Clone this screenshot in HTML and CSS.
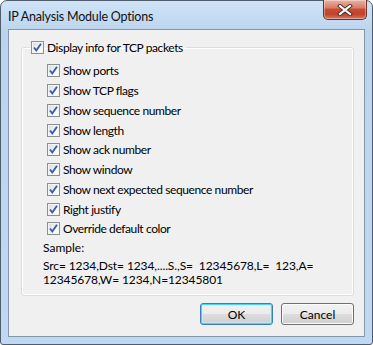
FILE: index.html
```html
<!DOCTYPE html>
<html lang="en">
<head>
  <meta charset="UTF-8">
  <title>IP Analysis Module Options</title>
  <link rel="stylesheet" href="styles.css">
</head>
<body>
  <div class="window">
    <div class="titlebar">
      <span class="title">IP Analysis Module Options</span>
      <button class="close" aria-label="Close">
        <svg width="16" height="12" viewBox="0 0 16 12">
          <path d="M3 2 L13 10 M13 2 L3 10" stroke="#4a2a24" stroke-width="4" stroke-linecap="square"/>
          <path d="M3 2 L13 10 M13 2 L3 10" stroke="#fff" stroke-width="2.2" stroke-linecap="square"/>
        </svg>
      </button>
    </div>

    <div class="client">
      <fieldset class="group">
        <legend>
          <label class="check"><span class="box"></span>Display info for TCP packets</label>
        </legend>

        <ul class="options">
          <li><label class="check"><span class="box"></span>Show ports</label></li>
          <li><label class="check"><span class="box"></span>Show TCP flags</label></li>
          <li><label class="check"><span class="box"></span>Show sequence number</label></li>
          <li><label class="check"><span class="box"></span>Show length</label></li>
          <li><label class="check"><span class="box"></span>Show ack number</label></li>
          <li><label class="check"><span class="box"></span>Show window</label></li>
          <li><label class="check"><span class="box"></span>Show next expected sequence number</label></li>
          <li><label class="check"><span class="box"></span>Right justify</label></li>
          <li><label class="check"><span class="box"></span>Override default color</label></li>
        </ul>

        <div class="sample">
          <div class="sample-label">Sample:</div>
          <div class="sample-line">Src= 1234,Dst= 1234,....S.,S=&nbsp; 12345678,L=&nbsp; 123,A=</div>
          <div class="sample-line">12345678,W= 1234,N=12345801</div>
        </div>
      </fieldset>

      <div class="buttons">
        <button class="btn default">OK</button>
        <button class="btn">Cancel</button>
      </div>
    </div>
  </div>
</body>
</html>
```

FILE: styles.css
```css
* {
  box-sizing: border-box;
  margin: 0;
  padding: 0;
}

body {
  font-family: Lato, 'Open Sans', sans-serif;
  font-size: 12px;
  color: #000;
  background: #fff;
}

.window {
  width: 373px;
  height: 345px;
  border: 1px solid #4f5d6c;
  border-radius: 7px 7px 3px 3px;
  background: linear-gradient(180deg, #cfe3f7 0, #bcd5ee 30px, #c0d8f1 100%);
  padding: 0 7px 7px;
  display: flex;
  flex-direction: column;
}

.titlebar {
  height: 28px;
  display: flex;
  justify-content: space-between;
  align-items: flex-start;
}

.title {
  padding-top: 8px;
  font-size: 12.5px;
  letter-spacing: -0.2px;
  color: #111;
}

.close {
  width: 44px;
  height: 20px;
  margin: -1px -2px 0 0;
  border: 1px solid #6b3328;
  border-top: none;
  border-radius: 0 0 5px 5px;
  background: linear-gradient(180deg, #eab3a6 0, #db7d69 40%, #c74a33 50%, #c0432c 75%, #d77a62 100%);
  box-shadow: inset 0 0 0 1px rgba(255, 255, 255, 0.35);
  display: flex;
  align-items: center;
  justify-content: center;
}

.client {
  flex: 1;
  background: #f0f0f0;
  border: 1px solid #8396aa;
  padding: 10px 10px 0 12px;
}

.group {
  border: 1px solid #d5dfe5;
  border-radius: 3px;
  box-shadow: inset 0 0 0 1px #fff;
  height: 256px;
  padding: 0 0 0 8px;
}

.group legend {
  padding: 0 3px 0 1px;
  line-height: 15px;
}

.check {
  display: flex;
  align-items: center;
  height: 15px;
  white-space: nowrap;
  letter-spacing: -0.4px;
}

.box {
  width: 13px;
  height: 13px;
  margin-right: 3px;
  border: 1px solid #8e8f8f;
  background:
    url("data:image/svg+xml;utf8,<svg xmlns='http://www.w3.org/2000/svg' width='11' height='11' viewBox='0 0 11 11'><path d='M2 5.5 L4.3 8.5 L9 1.8' fill='none' stroke='%23355cb0' stroke-width='1.9'/></svg>") center / 11px 11px no-repeat,
    linear-gradient(135deg, #d8dadb 0, #f6f6f6 60%, #ffffff 100%);
  box-shadow: inset 0 0 0 1px #f4f4f4;
  flex-shrink: 0;
}

.options {
  list-style: none;
  margin: 6px 0 0 17px;
}

.options li {
  height: 19.75px;
  display: flex;
  align-items: center;
}

.sample {
  margin: 1px 0 0 13px;
}

.sample-label {
  line-height: 16px;
}

.sample-label + .sample-line {
  margin-top: 3px;
}

.sample-line {
  line-height: 14px;
  height: 14px;
  white-space: nowrap;
  letter-spacing: -0.1px;
}

.buttons {
  display: flex;
  justify-content: flex-end;
  gap: 8px;
  margin-top: 7px;
}

.btn {
  width: 73px;
  height: 22px;
  font-family: inherit;
  font-size: 12px;
  border: 1px solid #707070;
  border-radius: 3px;
  background: linear-gradient(180deg, #f2f2f2 0, #ebebeb 50%, #dddddd 50%, #cfcfcf 100%);
  box-shadow: inset 0 0 0 1px #fcfcfc;
}

.btn.default {
  border-color: #3c7fb1;
  box-shadow: inset 0 0 0 1px #48d3fb, inset 0 0 0 2px rgba(200, 240, 255, 0.6);
}
```
